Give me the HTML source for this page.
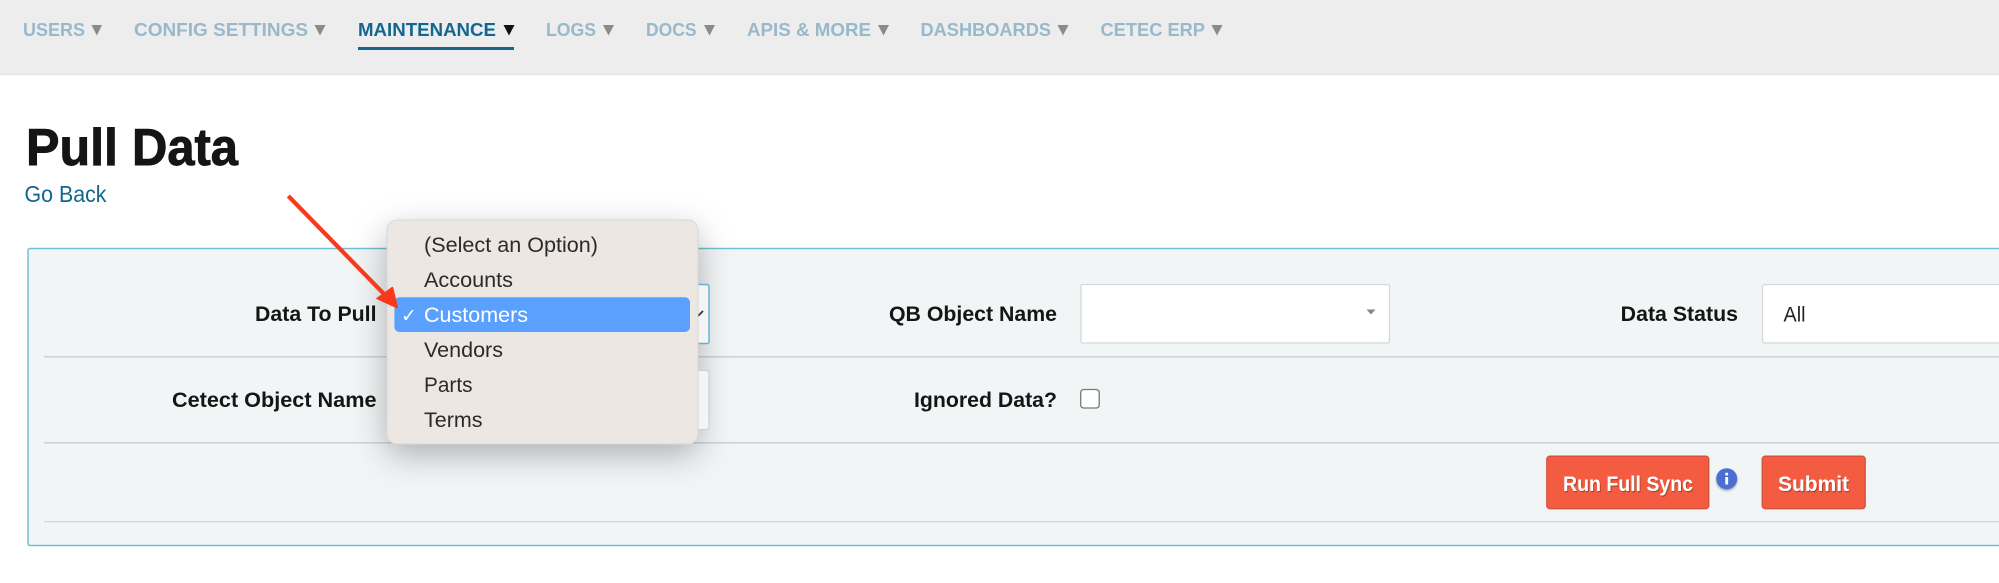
<!DOCTYPE html>
<html>
<head>
<meta charset="utf-8">
<title>Pull Data</title>
<style>
html,body{margin:0;padding:0;width:1999px;height:583px;overflow:hidden;background:#fff}
svg{display:block;position:absolute;left:0;top:0;filter:blur(.35px)}
text{font-family:"Liberation Sans",sans-serif;}
.nav{font-size:18.500px;font-weight:bold;fill:#97b9cb}
.lbl{font-size:21px;font-weight:bold;fill:#151515}
.opt{font-size:21.500px;fill:#2c2a29}
.btn{font-size:21px;font-weight:bold;fill:#fff}
</style>
</head>
<body>
<svg width="1999" height="583" viewBox="0 0 1999 583" xmlns="http://www.w3.org/2000/svg">
  <defs>
    <filter id="sh" x="-30%" y="-30%" width="160%" height="170%">
      <feGaussianBlur stdDeviation="17"/>
    </filter>
    <filter id="tsh" x="-10%" y="-20%" width="120%" height="150%">
      <feDropShadow dx="1" dy="1.300" stdDeviation="0" flood-color="#a53a28" flood-opacity=".8"/>
    </filter>
    <filter id="ish" x="-30%" y="-30%" width="160%" height="170%">
      <feDropShadow dx="0" dy="1.500" stdDeviation="1" flood-color="#000" flood-opacity=".35"/>
    </filter>
  </defs>

  <!-- nav -->
  <rect x="0" y="0" width="1999" height="74.500" fill="#ededed"/>
  <rect x="0" y="74" width="1999" height="1.200" fill="#dfe6e6"/>
  <text class="nav" x="23" y="36" textLength="62" lengthAdjust="spacingAndGlyphs">USERS</text>
  <path d="M91.500 25H102L96.800 35.500Z" fill="#8a8a8a"/>
  <text class="nav" x="134" y="36" textLength="174" lengthAdjust="spacingAndGlyphs">CONFIG SETTINGS</text>
  <path d="M314.500 25H325.500L320 35.500Z" fill="#8a8a8a"/>
  <text class="nav" x="358" y="36" textLength="138" lengthAdjust="spacingAndGlyphs" style="fill:#12668f">MAINTENANCE</text>
  <path d="M503.500 25H514.500L509 35.500Z" fill="#111"/>
  <rect x="358" y="47" width="156" height="3" fill="#12668f"/>
  <text class="nav" x="546" y="36" textLength="50" lengthAdjust="spacingAndGlyphs">LOGS</text>
  <path d="M603 25H614L608.500 35.500Z" fill="#8a8a8a"/>
  <text class="nav" x="646" y="36" textLength="50.500" lengthAdjust="spacingAndGlyphs">DOCS</text>
  <path d="M704 25H715L709.500 35.500Z" fill="#8a8a8a"/>
  <text class="nav" x="747" y="36" textLength="124" lengthAdjust="spacingAndGlyphs">APIS &amp; MORE</text>
  <path d="M878 25H889L883.500 35.500Z" fill="#8a8a8a"/>
  <text class="nav" x="920.500" y="36" textLength="130.500" lengthAdjust="spacingAndGlyphs">DASHBOARDS</text>
  <path d="M1057.500 25H1068.500L1063 35.500Z" fill="#8a8a8a"/>
  <text class="nav" x="1100.500" y="36" textLength="104.500" lengthAdjust="spacingAndGlyphs">CETEC ERP</text>
  <path d="M1211.500 25H1222.500L1217 35.500Z" fill="#8a8a8a"/>

  <!-- heading -->
  <text x="26" y="165" font-size="52" font-weight="bold" fill="#151515" stroke="#151515" stroke-width=".9" textLength="92" lengthAdjust="spacingAndGlyphs">Pull</text>
  <text x="132" y="165" font-size="52" font-weight="bold" fill="#151515" stroke="#151515" stroke-width=".9" textLength="106" lengthAdjust="spacingAndGlyphs">Data</text>
  <text x="24.500" y="202" font-size="23" fill="#12668f" textLength="82" lengthAdjust="spacingAndGlyphs">Go Back</text>

  <!-- panel -->
  <rect x="28" y="248.500" width="2000" height="297" rx="2" fill="#f2f5f6" stroke="#72bfd4" stroke-width="1.500"/>
  <rect x="44" y="356" width="1960" height="1.600" fill="#d0d3d5"/>
  <rect x="44" y="442" width="1960" height="1.600" fill="#d0d3d5"/>
  <rect x="44" y="521" width="1960" height="1.300" fill="#d3d6d8"/>

  <!-- labels -->
  <text class="lbl" x="255" y="321" textLength="121.500" lengthAdjust="spacingAndGlyphs">Data To Pull</text>
  <text class="lbl" x="172" y="407" textLength="204.500" lengthAdjust="spacingAndGlyphs">Cetect Object Name</text>
  <text class="lbl" x="889" y="321" textLength="168" lengthAdjust="spacingAndGlyphs">QB Object Name</text>
  <text class="lbl" x="914" y="407" textLength="143" lengthAdjust="spacingAndGlyphs">Ignored Data?</text>
  <text class="lbl" x="1620.700" y="321" textLength="117.300" lengthAdjust="spacingAndGlyphs">Data Status</text>

  <!-- QB select -->
  <rect x="1081" y="284.500" width="308.500" height="58.500" rx="1.500" fill="#fff" stroke="#d5d8da" stroke-width="1.300"/>
  <path d="M1366.500 309.500H1375.500L1371 314.500Z" fill="#888"/>

  <!-- checkbox -->
  <rect x="1080.700" y="389.500" width="18.500" height="18.500" rx="3" fill="#fff" stroke="#777" stroke-width="1.300"/>

  <!-- Data status select -->
  <rect x="1762.500" y="284.500" width="300" height="58.500" rx="2" fill="#fff" stroke="#d5d8da" stroke-width="1.300"/>
  <text x="1783.500" y="321.500" font-size="21" fill="#222" textLength="22" lengthAdjust="spacingAndGlyphs">All</text>

  <!-- buttons -->
  <rect x="1546.800" y="456.200" width="162" height="52.500" rx="3" fill="#f45c41" stroke="#d4513a" stroke-width="1.300"/>
  <text class="btn" x="1563" y="491" textLength="130" lengthAdjust="spacingAndGlyphs" filter="url(#tsh)">Run Full Sync</text>
  <circle cx="1726.700" cy="478.700" r="10.500" fill="#4a6fd0" filter="url(#ish)"/>
  <rect x="1725.300" y="477" width="2.800" height="7.500" fill="#fff"/>
  <rect x="1725.300" y="472.800" width="2.800" height="2.600" fill="#fff"/>
  <rect x="1762.200" y="456.200" width="103" height="52.500" rx="3" fill="#f45c41" stroke="#d4513a" stroke-width="1.300"/>
  <text class="btn" x="1778" y="491" textLength="71" lengthAdjust="spacingAndGlyphs" filter="url(#tsh)">Submit</text>

  <!-- dropdown -->
  <rect x="387" y="232" width="311" height="222" rx="10" fill="#000" fill-opacity=".3" filter="url(#sh)"/>
  <rect x="600" y="284.500" width="109" height="59" rx="2" fill="#f3f4f5" stroke="#5fb0cc" stroke-width="1.400"/>
  <rect x="600" y="370.500" width="109" height="59" rx="2" fill="#f3f4f5" stroke="#cfd2d4" stroke-width="1.300"/>
  <path d="M698 316L703 311" stroke="#333" stroke-width="1.800" fill="none"/>
  <rect x="387" y="220" width="311" height="224" rx="10" fill="#ece7e3" stroke="#dad8d5" stroke-width="1"/>
  <rect x="394.400" y="297.300" width="295.600" height="34.700" rx="5" fill="#5aa0ff"/>
  <text class="opt" x="424" y="252" textLength="174" lengthAdjust="spacingAndGlyphs">(Select an Option)</text>
  <text class="opt" x="424" y="287" textLength="89" lengthAdjust="spacingAndGlyphs">Accounts</text>
  <text x="401" y="322" font-size="19" fill="#fff" style="font-family:'DejaVu Sans',sans-serif">✓</text>
  <text class="opt" x="424" y="322" textLength="104" lengthAdjust="spacingAndGlyphs" style="fill:#fff">Customers</text>
  <text class="opt" x="424" y="357" textLength="79" lengthAdjust="spacingAndGlyphs">Vendors</text>
  <text class="opt" x="424" y="392" textLength="48.500" lengthAdjust="spacingAndGlyphs">Parts</text>
  <text class="opt" x="424" y="427" textLength="58.500" lengthAdjust="spacingAndGlyphs">Terms</text>

  <!-- red arrow -->
  <path d="M288.300 196L385 295" stroke="#f8391c" stroke-width="4.200" fill="none"/>
  <path d="M397.300 307.700L377 298.500L392.500 287.500Z" fill="#f8391c" stroke="#f8391c" stroke-width="1.500" stroke-linejoin="round"/>
</svg>
</body>
</html>
